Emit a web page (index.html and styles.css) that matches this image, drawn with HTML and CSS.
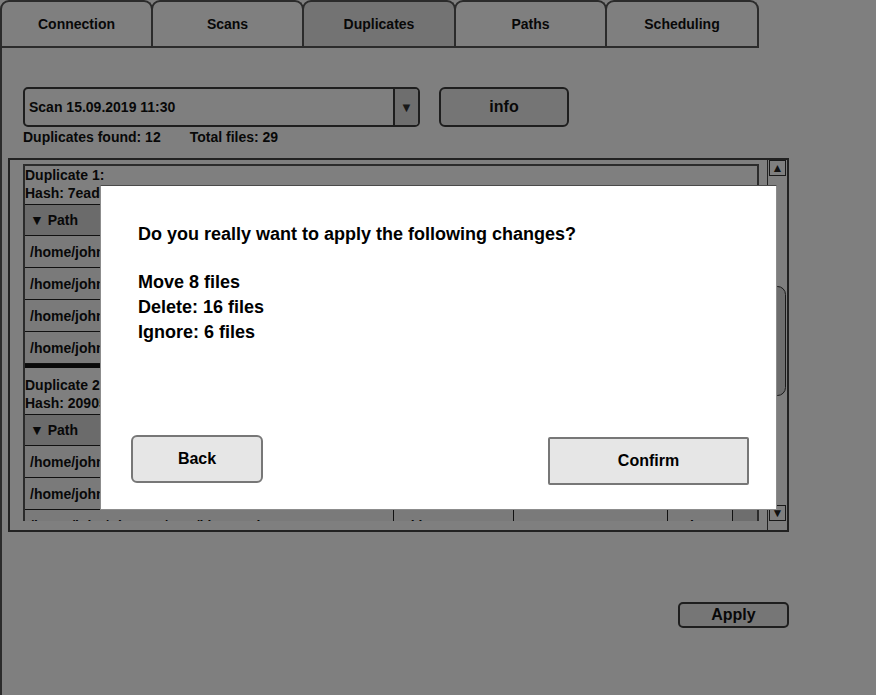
FILE: index.html
```html
<!DOCTYPE html>
<html lang="en">
<head>
<meta charset="utf-8">
<title>Duplicates</title>
<link rel="stylesheet" href="styles.css">
</head>
<body>
<div class="app">
  <div class="tabs">
    <div class="tab">Connection</div>
    <div class="tab">Scans</div>
    <div class="tab tab-active">Duplicates</div>
    <div class="tab">Paths</div>
    <div class="tab">Scheduling</div>
  </div>
  <div class="panel">
    <div class="toolbar">
      <div class="combo">
        <span class="combo-text">Scan 15.09.2019 11:30</span>
        <span class="combo-arrow">&#9660;</span>
      </div>
      <button class="btn info">info</button>
    </div>
    <div class="stats">
      <span>Duplicates found: 12</span>
      <span>Total files: 29</span>
    </div>
    <div class="list">
      <div class="list-body">
        <div class="viewport">
          <div class="dups">
            <div class="dup">
              <div class="dup-title">
                <div>Duplicate 1:</div>
                <div>Hash: 7ead3c91f0a4b2e8d5c6f17a9b03e4d2</div>
              </div>
              <div class="table">
                <div class="row head"><div class="cell">&#9660; Path</div><div class="cell">Size</div><div class="cell">Modified</div><div class="cell">Action</div></div>
                <div class="row"><div class="cell">/home/john/Pictures/cats/kitten.jpg</div><div class="cell">1.2 MB</div><div class="cell">09.09.2019</div><div class="cell act"><span class="act-text">Delete</span><span class="act-arrow">&#9660;</span></div></div>
                <div class="row"><div class="cell">/home/john/Downloads/kitten.jpg</div><div class="cell">1.2 MB</div><div class="cell">10.09.2019</div><div class="cell act"><span class="act-text">Delete</span><span class="act-arrow">&#9660;</span></div></div>
                <div class="row"><div class="cell">/home/john/Desktop/kitten (1).jpg</div><div class="cell">1.2 MB</div><div class="cell">11.09.2019</div><div class="cell act"><span class="act-text">Move</span><span class="act-arrow">&#9660;</span></div></div>
                <div class="row"><div class="cell">/home/john/Backup/kitten.jpg</div><div class="cell">1.2 MB</div><div class="cell">12.09.2019</div><div class="cell act"><span class="act-text">Ignore</span><span class="act-arrow">&#9660;</span></div></div>
              </div>
            </div>
            <div class="dup">
              <div class="dup-title">
                <div>Duplicate 2:</div>
                <div>Hash: 20905be1c7d84f3a6e2b9c0d15f87a64</div>
              </div>
              <div class="table">
                <div class="row head"><div class="cell">&#9660; Path</div><div class="cell">Size</div><div class="cell">Modified</div><div class="cell">Action</div></div>
                <div class="row"><div class="cell">/home/john/Music/song.mp3</div><div class="cell">4.8 MB</div><div class="cell">02.09.2019</div><div class="cell act"><span class="act-text">Delete</span><span class="act-arrow">&#9660;</span></div></div>
                <div class="row"><div class="cell">/home/john/Downloads/song.mp3</div><div class="cell">4.8 MB</div><div class="cell">05.09.2019</div><div class="cell act"><span class="act-text">Delete</span><span class="act-arrow">&#9660;</span></div></div>
                <div class="row"><div class="cell">/home/john/Pictures/cats/kitten_2.jpg</div><div class="cell">1 kb</div><div class="cell">09.09.2019</div><div class="cell act"><span class="act-text">Delete</span><span class="act-arrow">&#9660;</span></div></div>
              </div>
            </div>
          </div>
        </div>
        <div class="hscroll"></div>
      </div>
      <div class="vscroll">
        <div class="sb-btn">&#9650;</div>
        <div class="sb-thumb"></div>
        <div class="sb-btn sb-down">&#9660;</div>
      </div>
    </div>
    <div class="actions">
      <button class="btn apply">Apply</button>
    </div>
  </div>
</div>

<div class="overlay"></div>

<div class="dialog">
  <div class="dialog-text">
    <div class="dialog-q">Do you really want to apply the following changes?</div>
    <div class="changes">
      <div>Move 8 files</div>
      <div>Delete: 16 files</div>
      <div>Ignore: 6 files</div>
    </div>
  </div>
  <div class="dialog-actions">
    <button class="dbtn back">Back</button>
    <button class="dbtn confirm">Confirm</button>
  </div>
</div>
</body>
</html>
```

FILE: styles.css
```css
* {
  box-sizing: border-box;
}

html, body {
  margin: 0;
  padding: 0;
}

body {
  width: 876px;
  height: 695px;
  overflow: hidden;
  background: #ffffff;
  color: #111111;
  font-family: "Liberation Sans", Arial, sans-serif;
  font-weight: bold;
  font-size: 14px;
}

button {
  font-family: inherit;
  font-weight: bold;
  color: #111111;
  padding: 0;
  cursor: pointer;
}

/* Tabs */
.tabs {
  display: flex;
  width: 759px;
  height: 48px;
  border-bottom: 2px solid #565656;
}

.tab {
  height: 46px;
  width: 153px;
  border: 2px solid #565656;
  border-bottom: none;
  border-radius: 9px 9px 0 0;
  display: flex;
  align-items: center;
  justify-content: center;
  font-size: 14px;
  background: #ffffff;
}

.tab + .tab {
  margin-left: -2px;
}

.tab:nth-child(3),
.tab:nth-child(5) {
  width: 154px;
}

.tab-active {
  background: #e6e6e6;
}

/* Panel */
.panel {
  height: 647px;
  border-left: 2px solid #565656;
  padding: 39px 0 0 6px;
}

.toolbar {
  display: flex;
  gap: 19px;
  margin-left: 15px;
  height: 40px;
}

.combo {
  width: 397px;
  height: 40px;
  border: 2px solid #3c3c3c;
  border-radius: 5px;
  display: flex;
  overflow: hidden;
  background: #ffffff;
}

.combo-text {
  flex: 1;
  padding-left: 4px;
  line-height: 36px;
  font-size: 14px;
}

.combo-arrow {
  width: 25px;
  border-left: 2px solid #3c3c3c;
  background: #dcdcdc;
  font-size: 13px;
  display: flex;
  align-items: center;
  justify-content: center;
  color: #333333;
}

.btn {
  border: 2px solid #3c3c3c;
  background: #ebebeb;
  font-size: 16px;
}

.info {
  width: 130px;
  height: 40px;
  border-radius: 6px;
}

.stats {
  margin-left: 15px;
  display: flex;
  gap: 29px;
  line-height: 20px;
  font-size: 14px;
}

/* List */
.list {
  margin-top: 11px;
  width: 781px;
  height: 374px;
  border: 2px solid #444444;
  display: flex;
}

.list-body {
  flex: 1;
  display: flex;
  flex-direction: column;
}

.viewport {
  height: 361px;
  overflow: hidden;
  padding: 4px 0 0 13px;
}

.hscroll {
  flex: 1;
}

.dups {
  width: 736px;
  border: 2px solid #565656;
  border-bottom: none;
}

.dup + .dup {
  border-top: 4px solid #141414;
  padding-top: 8px;
}

.dup-title {
  padding: 0 0 2px 0;
  line-height: 18px;
  font-size: 14px;
  white-space: nowrap;
}

.table {
  display: flex;
  flex-direction: column;
}

.row {
  display: grid;
  grid-template-columns: 368px 120px 154px 1fr;
  height: 32px;
  border-top: 1px solid #222222;
  background: #f5f5f5;
}

.row.head {
  height: 31px;
  background: #d6d6d6;
}

.table .row:last-child {
  border-bottom: 1px solid #222222;
  height: 33px;
}

.cell {
  display: flex;
  align-items: center;
  padding-left: 5px;
  white-space: nowrap;
  overflow: hidden;
  font-size: 14px;
}

.cell + .cell {
  border-left: 1px solid #222222;
}

.cell.act {
  padding-left: 4px;
  padding-right: 0;
}

.act-text {
  flex: 1;
}

.act-arrow {
  width: 25px;
  height: 100%;
  background: #dcdcdc;
  border-left: 1px solid #222222;
  font-size: 9px;
  display: flex;
  align-items: center;
  justify-content: center;
}

/* Vertical scrollbar */
.vscroll {
  width: 20px;
  border-left: 1px solid #444444;
  padding: 0 1px 9px 1px;
  display: flex;
  flex-direction: column;
}

.sb-btn {
  height: 16px;
  border: 1px solid #333333;
  font-size: 12px;
  line-height: 14px;
  text-align: center;
  color: #222222;
  background: #ffffff;
}

.sb-thumb {
  margin-top: 110px;
  height: 110px;
  border: 1px solid #333333;
  border-radius: 9px;
  background: #dcdcdc;
}

.sb-down {
  margin-top: auto;
}

/* Apply */
.actions {
  width: 781px;
  margin-top: 70px;
  display: flex;
  justify-content: flex-end;
}

.apply {
  width: 111px;
  height: 26px;
  border-radius: 5px;
  background: #ececec;
}

/* Modal */
.overlay {
  position: fixed;
  inset: 0;
  background: rgba(0, 0, 0, 0.5);
}

.dialog {
  position: fixed;
  left: 100px;
  top: 185px;
  width: 677px;
  height: 325px;
  background: #ffffff;
  border: 1px solid #8c8c8c;
  border-top-color: #4a4a4a;
  display: flex;
  flex-direction: column;
  padding: 36px 27px 24px 30px;
  color: #000000;
}

.dialog-text {
  padding-left: 7px;
  font-size: 18px;
  line-height: 25px;
}

.changes {
  margin-top: 23px;
}

.dialog-actions {
  margin-top: auto;
  display: flex;
  justify-content: space-between;
  align-items: flex-start;
}

.dbtn {
  height: 48px;
  background: #e6e6e6;
  border: 2px solid #777777;
  font-size: 16px;
  color: #000000;
}

.back {
  width: 132px;
  border-radius: 6px;
}

.confirm {
  width: 201px;
  margin-top: 2px;
  border-radius: 2px;
}
```
